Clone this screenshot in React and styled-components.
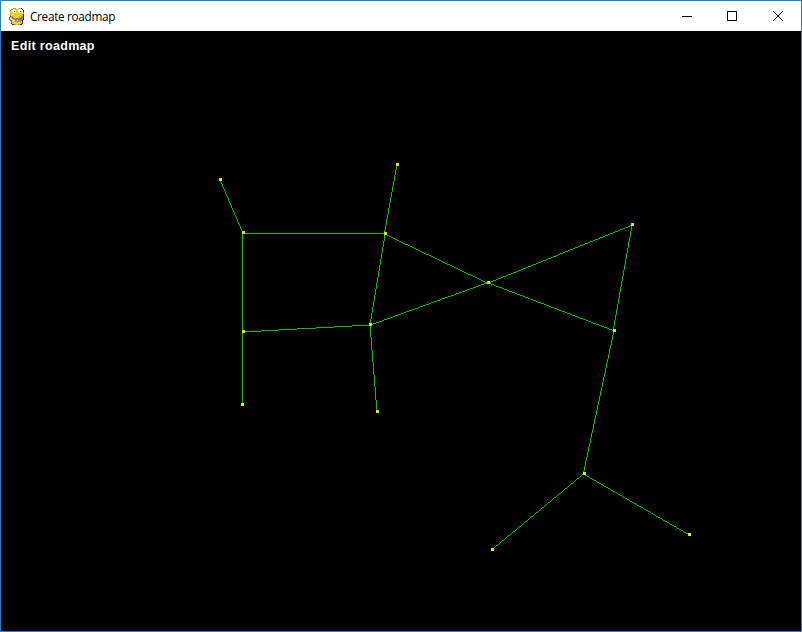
import React from "react";
import styled, { createGlobalStyle } from "styled-components";

const GlobalStyle = createGlobalStyle`
  html, body { margin: 0; padding: 0; background: #000; overflow: hidden; }
`;

const Window = styled.div`
  box-sizing: border-box;
  width: 802px;
  height: 632px;
  display: flex;
  flex-direction: column;
  border: 1px solid #1883d7;
  background: #000;
`;

const TitleBar = styled.header`
  height: 30px;
  flex: none;
  display: flex;
  align-items: center;
  background: #fff;
  color: #000;
`;

const AppIcon = styled.svg`
  width: 16px;
  height: 17px;
  margin-left: 8px;
  flex: none;
`;

const Title = styled.span`
  margin-left: 5px;
  flex: 1;
  font: 11.75px/16px "Open Sans", sans-serif;
  letter-spacing: -0.3px;
  white-space: nowrap;
`;

const Controls = styled.div`
  display: flex;
  height: 100%;
`;

const ControlButton = styled.button`
  width: ${(p) => p.$width || 46}px;
  height: 29px;
  padding: 0;
  border: 0;
  display: flex;
  align-items: center;
  justify-content: center;
  background: transparent;

  svg { display: block; }
`;

const Viewport = styled.main`
  flex: 1;
  display: grid;
  background: #000;
`;

const Mode = styled.div`
  grid-area: 1 / 1;
  padding: 7px 0 0 10px;
  color: #fff;
  font: bold 12.5px/16px "Liberation Sans", Arial, sans-serif;
  letter-spacing: 0.33px;
`;

const Map = styled.svg`
  grid-area: 1 / 1;
  width: 800px;
  height: 600px;
  display: block;
`;

const ROADS = [
  [220, 179, 242, 232],
  [242, 233, 384, 233],
  [242, 233, 242, 404],
  [396, 164, 384, 234],
  [384, 234, 370, 324],
  [384, 234, 488, 283],
  [488, 283, 613, 330],
  [370, 324, 488, 282],
  [488, 282, 631, 225],
  [631, 225, 613, 330],
  [242, 331, 369, 325],
  [370, 324, 376, 411],
  [613, 330, 583, 474],
  [583, 474, 492, 549],
  [583, 474, 688, 534],
];

const NODES = [
  [220, 179], [243, 232], [397, 164], [385, 233], [488, 282],
  [632, 224], [614, 330], [370, 324], [243, 331], [242, 404],
  [377, 411], [584, 473], [492, 549], [689, 534],
];

// Rasterises a road into unit squares so that it keeps hard pixel steps.
function roadPath([x1, y1, x2, y2]) {
  const sx = Math.sign(x2 - x1);
  const sy = Math.sign(y2 - y1);
  const w = Math.abs(x2 - x1) + 1;
  const h = Math.abs(y2 - y1) + 1;
  const wide = w >= h;
  const major = Math.max(w, h);
  const minor = wide ? (sy ? h : 0) : (sx ? w : 0);
  let x = x1;
  let y = y1;
  let error = 0;
  let d = "";
  for (let i = 0; i < major; i++) {
    d += `M${x} ${y}h1v1h-1z`;
    error += minor;
    if (wide) x += sx;
    else y += sy;
    if (error >= major) {
      error -= major;
      if (wide) y += sy;
      else x += sx;
    }
  }
  return d;
}

const PALETTE = { k: "#2c281c", y: "#ecd022", w: "#f6f4ea", o: "#c29e18", g: "#96968f", r: "#c04a40", l: "#f8ea70", d: "#6b6658" };

const SPRITE = [
  "....ooo...ook...",
  "..oowwyyyywwwk..",
  ".oywwwwyywwwwwk.",
  ".oywwdwyywwdwwk.",
  ".yyywwwyyywwwyo.",
  ".yyyyyyyyyyyyyo.",
  ".oyllyyyyyyyyyk.",
  ".oyyyyyyyyyyyok.",
  ".dooyyyyyyyyook.",
  "dggdoyyyyyoodgk.",
  "dwwgdooddogrrgk.",
  "dgwwggrggrrrgdk.",
  ".dggwwggwgggdk..",
  "..dyygggggooyk..",
  "..oyylyyyyyyyk..",
  "..kyyyyyyyyyok..",
  "...kkooyyookk...",
];

function SnakeIcon() {
  return (
    <AppIcon viewBox="0 0 16 17" shapeRendering="crispEdges" aria-hidden="true">
      {SPRITE.flatMap((row, y) =>
        [...row].map((c, x) =>
          PALETTE[c] ? <rect key={`${x}-${y}`} x={x} y={y} width="1" height="1" fill={PALETTE[c]} /> : null
        )
      )}
    </AppIcon>
  );
}

export default function App() {
  return (
    <>
      <GlobalStyle />
      <Window>
        <TitleBar>
          <SnakeIcon />
          <Title>Create roadmap</Title>
          <Controls>
            <ControlButton aria-label="Minimize" $width={44}>
              <svg width="10" height="10" shapeRendering="crispEdges"><path d="M0 5h10v1H0z" /></svg>
            </ControlButton>
            <ControlButton aria-label="Maximize">
              <svg width="10" height="10" shapeRendering="crispEdges"><path d="M.5.5h9v9h-9z" fill="none" stroke="#000" /></svg>
            </ControlButton>
            <ControlButton aria-label="Close">
              <svg width="10" height="10"><path d="M0 0l10 10M10 0L0 10" fill="none" stroke="#000" /></svg>
            </ControlButton>
          </Controls>
        </TitleBar>
        <Viewport>
          <Mode>Edit roadmap</Mode>
          <Map viewBox="1 31 800 600" shapeRendering="crispEdges">
            {ROADS.map((r) => <path key={r.join()} d={roadPath(r)} fill="#00c000" />)}
            {NODES.map(([x, y]) => (
              <rect key={`${x}-${y}`} x={x - 1} y={y - 1} width="3" height="3" fill="#e8e800" />
            ))}
          </Map>
        </Viewport>
      </Window>
    </>
  );
}
